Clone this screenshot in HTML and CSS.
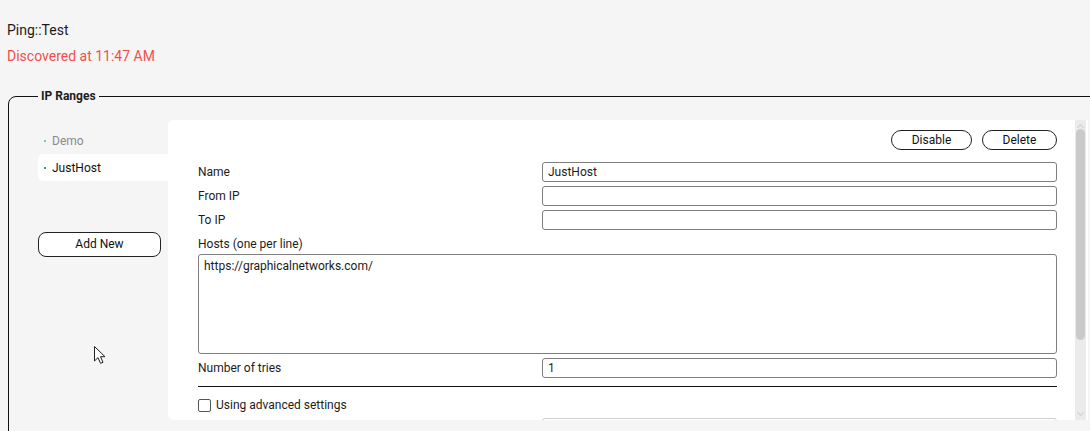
FILE: index.html
```html
<!DOCTYPE html>
<html>
<head>
<meta charset="utf-8">
<link rel="stylesheet" href="styles.css">
</head>
<body>
<div class="header">
  <div class="title">Ping::Test</div>
  <div class="status">Discovered at 11:47 AM</div>
</div>
<fieldset class="ranges">
  <legend>IP Ranges</legend>
  <div class="layout">
    <div class="side">
      <ul class="list">
        <li class="item muted"><span class="dot"></span>Demo</li>
        <li class="item active"><span class="dot"></span>JustHost</li>
      </ul>
      <button class="pill addnew">Add New</button>
    </div>
    <div class="panel">
      <div class="content">
        <div class="actions">
          <button class="pill disable">Disable</button>
          <button class="pill delete">Delete</button>
        </div>
        <div class="row"><label>Name</label><div class="field">JustHost</div></div>
        <div class="row"><label>From IP</label><div class="field"></div></div>
        <div class="row"><label>To IP</label><div class="field"></div></div>
        <div class="hosts-label">Hosts (one per line)</div>
        <div class="area">https://graphicalnetworks.com/</div>
        <div class="row tries"><label>Number of tries</label><div class="field">1</div></div>
        <div class="rule"></div>
        <div class="check-row"><span class="box"></span><span>Using advanced settings</span></div>
        <div class="row cut"><label></label><div class="field light"></div></div>
      </div>
      <div class="scrollbar">
        <div class="arrow up"></div>
        <div class="thumb"></div>
        <div class="arrow down"></div>
      </div>
    </div>
  </div>
</fieldset>
<svg class="cursor" width="14" height="20" viewBox="0 0 14 20"><path d="M1.5 1.5 L1.5 16 L5 12.6 L7.6 18.4 L10 17.3 L7.5 11.7 L12 11.7 Z" fill="#fff" stroke="#222" stroke-width="1" stroke-linejoin="round"/></svg>
</body>
</html>
```

FILE: styles.css
```css
html, body {
  margin: 0;
  padding: 0;
  background: #f5f5f5;
  overflow: hidden;
  font-family: Roboto, "Liberation Sans", sans-serif;
  color: #1c1c1c;
}
.header {
  padding: 20px 7px 0;
  font-size: 14px;
}
.title { line-height: 20px; }
.status { line-height: 20px; margin-top: 6px; color: #f0504e; }
.ranges {
  margin: 22px 0 0 8px;
  padding: 16px 0 0 29px;
  border: 1px solid #111;
  border-radius: 8px;
  width: 1120px;
  height: 352px;
  box-sizing: border-box;
  min-width: 0;
}
.ranges legend {
  font-size: 12px;
  font-weight: bold;
  line-height: 16px;
  padding: 0 3px;
  margin-left: 0;
}
.layout {
  display: flex;
  align-items: flex-start;
}
.side {
  width: 130px;
  flex: none;
  padding-top: 7px;
}
.list { list-style: none; margin: 0; padding: 0; }
.item {
  height: 27px;
  display: flex;
  align-items: center;
  font-size: 12px;
  padding-left: 6px;
  border-radius: 5px 0 0 5px;
}
.item.muted { color: #8a8a8a; }
.item.active { background: #fff; color: #111; }
.dot {
  width: 2px; height: 2px;
  background: #12a894;
  margin-right: 6px;
}
.item.muted .dot { background: #6fcbbd; }
.pill {
  font-family: Roboto, "Liberation Sans", sans-serif;
  font-size: 12px;
  color: #111;
  background: #fff;
  border: 1px solid #222;
  border-radius: 10px;
  height: 20px;
  padding: 0;
  box-sizing: border-box;
  line-height: 18px;
}
.addnew {
  display: block;
  width: 123px;
  height: 25px;
  border-radius: 8px;
  margin-top: 51px;
  line-height: 23px;
}
.panel {
  display: flex;
  width: 920px;
  height: 300px;
  background: #fff;
  border-radius: 6px 0 0 6px;
  overflow: hidden;
  flex: none;
}
.content {
  flex: 1;
  padding: 10px 18px 0 30px;
  font-size: 12px;
}
.actions {
  display: flex;
  justify-content: flex-end;
  gap: 10px;
  margin-bottom: 12px;
}
.disable { width: 81px; }
.delete { width: 75px; }
.row {
  display: flex;
  align-items: center;
  height: 20px;
  margin-bottom: 4px;
}
.row label { width: 344px; flex: none; }
.field {
  flex: 1;
  height: 20px;
  box-sizing: border-box;
  border: 1px solid #7e7e7e;
  border-radius: 3px;
  padding: 0 5px;
  line-height: 18px;
}
.field.light { border-color: #cfcfcf; }
.hosts-label { line-height: 16px; margin-top: 6px; margin-bottom: 2px; }
.area {
  height: 100px;
  box-sizing: border-box;
  border: 1px solid #7e7e7e;
  border-radius: 3px;
  padding: 3px 5px;
  line-height: 16px;
}
.tries { margin-top: 4px; }
.rule {
  height: 1px;
  background: #111;
  margin: 8px 0 11px;
}
.check-row {
  display: flex;
  align-items: center;
  gap: 5px;
  height: 14px;
  margin-bottom: 6px;
}
.box {
  width: 13px; height: 13px;
  box-sizing: border-box;
  border: 1px solid #555;
  border-radius: 2px;
}
.scrollbar {
  width: 11px;
  flex: none;
  background: #ebebeb;
  position: relative;
  margin-right: 2px;
}
.thumb {
  position: absolute;
  left: 1px; right: 1px;
  top: 9px;
  height: 211px;
  background: #cbcaca;
  border-radius: 5px;
}
.arrow {
  position: absolute;
  left: 3px;
  width: 4px; height: 4px;
  border-left: 1px solid #cfcfcf;
  border-top: 1px solid #cfcfcf;
}
.arrow.up { top: 5px; transform: rotate(45deg); }
.arrow.down { bottom: 5px; transform: rotate(225deg); }
.cursor {
  position: absolute;
  left: 93px;
  top: 345px;
}
```
